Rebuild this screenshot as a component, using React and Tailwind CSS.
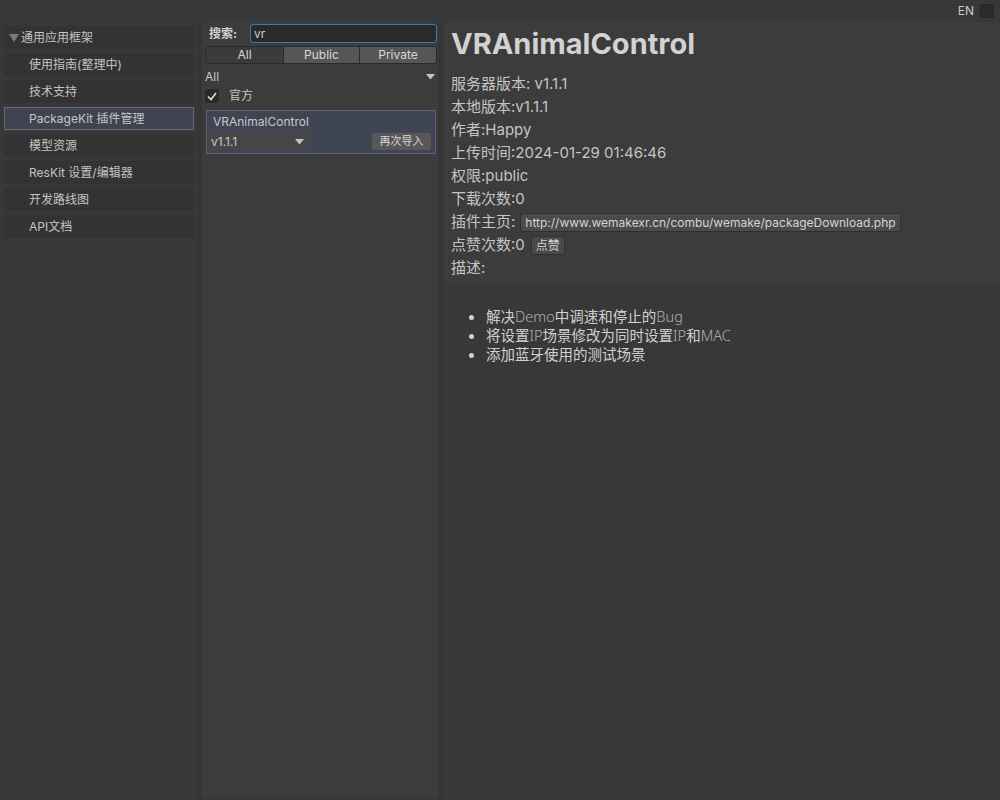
import React from 'react';

const font = { fontFamily: 'Inter, "Noto Sans CJK SC", sans-serif' };

const navItems = [
  { label: '使用指南(整理中)' },
  { label: '技术支持' },
  { label: 'PackageKit 插件管理', active: true },
  { label: '模型资源' },
  { label: 'ResKit 设置/编辑器' },
  { label: '开发路线图' },
  { label: 'API文档' },
];

function Caret({ className = '' }) {
  return (
    <svg width="9" height="6" viewBox="0 0 9 6" className={className}>
      <path d="M0 0 L9 0 L4.5 5.5 Z" fill="#c4c4c4" />
    </svg>
  );
}

function Sidebar() {
  return (
    <div className="w-[198px] shrink-0 pt-[4px] px-[4px] flex flex-col gap-[4px]">
      <div className="h-[23px] bg-[#333333] flex items-center pl-[5px] text-[12px] text-[#c4c4c4]">
        <svg width="10" height="8" viewBox="0 0 10 8" className="mr-[2px]">
          <path d="M0 0 L10 0 L5 8 Z" fill="#7a7a7a" />
        </svg>
        通用应用框架
      </div>
      {navItems.map((it) => (
        <div
          key={it.label}
          className={`h-[23px] flex items-center text-[12px] text-[#c4c4c4] ${
            it.active ? 'bg-[#3f4450] border border-[#5f6b7d] pl-[24px]' : 'bg-[#333333] pl-[25px]'
          }`}
        >
          {it.label}
        </div>
      ))}
    </div>
  );
}

function MiddlePanel() {
  return (
    <div className="w-[246px] shrink-0 flex border-r-[6px] border-[#363636]">
      <div className="w-[4px] bg-[#353535]" />
      <div className="flex-1 bg-[#3c3c3c] pl-[3px] pr-[1px] pt-[2px] mb-[3px]">
        <div className="flex items-center h-[19px]">
          <span className="w-[45px] pl-[4px] text-[12px] font-bold text-[#d0d0d0]">搜索:</span>
          <div className="flex-1 h-[19px] bg-[#2a2a2a] border border-[#3b78b5] rounded-[3px] flex items-center px-[3px] text-[12px] text-[#d0d0d0]">
            vr
          </div>
        </div>
        <div className="mt-[3px] h-[18px] flex rounded-[3px] overflow-hidden border border-[#2a2a2a] text-[12px] text-[#d8d8d8]">
          <div className="w-[77px] bg-[#3b3b3b] flex items-center justify-center">All</div>
          <div className="w-[76px] bg-[#565656] border-l border-[#2a2a2a] flex items-center justify-center">Public</div>
          <div className="flex-1 bg-[#565656] border-l border-[#2a2a2a] flex items-center justify-center">Private</div>
        </div>
        <div className="mt-[4px] h-[18px] flex items-center justify-between pr-[2px] text-[12px] text-[#c8c8c8]">
          <span>All</span>
          <Caret />
        </div>
        <div className="mt-[2px] h-[16px] flex items-center text-[12px] text-[#c8c8c8]">
          <div className="w-[14px] h-[14px] bg-[#2b2b2b] rounded-[2px] flex items-center justify-center">
            <svg width="10" height="9" viewBox="0 0 10 9">
              <path d="M1 4.5 L4 7.5 L9 1" stroke="#e0e0e0" strokeWidth="1.6" fill="none" />
            </svg>
          </div>
          <span className="ml-[10px]">官方</span>
        </div>
        <div className="mt-[6px] mx-[1px] h-[44px] bg-[#3f4552] border border-[#5b6272] px-[1px] pt-[3px]">
          <div className="pl-[5px] text-[12px] text-[#c8c8c8] leading-[16px]">VRAnimalControl</div>
          <div className="flex items-center justify-between mt-[2px]">
            <div className="w-[101px] h-[19px] bg-[#464646] flex items-center justify-between pl-[3px] pr-[5px] text-[12px] text-[#c8c8c8]">
              <span>v1.1.1</span>
              <Caret />
            </div>
            <div className="mr-[3px] w-[59px] h-[17px] bg-[#585858] rounded-[3px] flex items-center justify-center text-[11px] text-[#d8d8d8]">
              再次导入
            </div>
          </div>
        </div>
      </div>
    </div>
  );
}

function Info({ children }) {
  return <div className="h-[23px] flex items-center text-[15px] text-[#c4c4c4]">{children}</div>;
}

function RightPanel() {
  const lat = 'font-light text-[#b0b0b0]';
  return (
    <div className="flex-1 flex flex-col">
      <div className="bg-[#3c3c3c] h-[263px] pl-[7px] pt-[4px]">
        <div className="text-[29px] font-bold text-[#d2d2d2] leading-[36px]">VRAnimalControl</div>
        <div className="mt-[11px]">
          <Info>服务器版本: v1.1.1</Info>
          <Info>本地版本:v1.1.1</Info>
          <Info>作者:Happy</Info>
          <Info>上传时间:2024-01-29 01:46:46</Info>
          <Info>权限:public</Info>
          <Info>下载次数:0</Info>
          <Info>
            插件主页:
            <span className="ml-[5px] h-[19px] px-[4px] bg-[#4a4a4a] rounded-[2px] border border-[#2f2f2f] flex items-center text-[12px] text-[#d4d4d4]">
              http://www.wemakexr.cn/combu/wemake/packageDownload.php
            </span>
          </Info>
          <Info>
            点赞次数:0
            <span className="ml-[6px] h-[19px] px-[4px] bg-[#4a4a4a] rounded-[2px] border border-[#2f2f2f] flex items-center text-[12px] text-[#d4d4d4]">
              点赞
            </span>
          </Info>
          <Info>描述:</Info>
        </div>
      </div>
      <ul
        className="mt-[22px] pl-[42px] text-[14.5px] text-[#d0d0d0] leading-[19px] list-disc"
        style={{ fontFamily: '"Noto Sans", "Noto Sans CJK SC", sans-serif' }}
      >
        <li>解决<span className={lat}>Demo</span>中调速和停止的<span className={lat}>Bug</span></li>
        <li>将设置<span className={lat}>IP</span>场景修改为同时设置<span className={lat}>IP</span>和<span className={lat}>MAC</span></li>
        <li>添加蓝牙使用的测试场景</li>
      </ul>
    </div>
  );
}

export default function App() {
  return (
    <div className="w-[1000px] h-[800px] bg-[#383838] flex flex-col overflow-hidden" style={font}>
      <div className="h-[22px] shrink-0 flex items-center justify-end pr-[6px]">
        <span className="text-[12px] text-[#c8c8c8] mr-[6px]">EN</span>
        <div className="w-[14px] h-[14px] bg-[#2b2b2b] border border-[#252525] rounded-[2px]" />
      </div>
      <div className="flex flex-1">
        <Sidebar />
        <MiddlePanel />
        <RightPanel />
      </div>
    </div>
  );
}
